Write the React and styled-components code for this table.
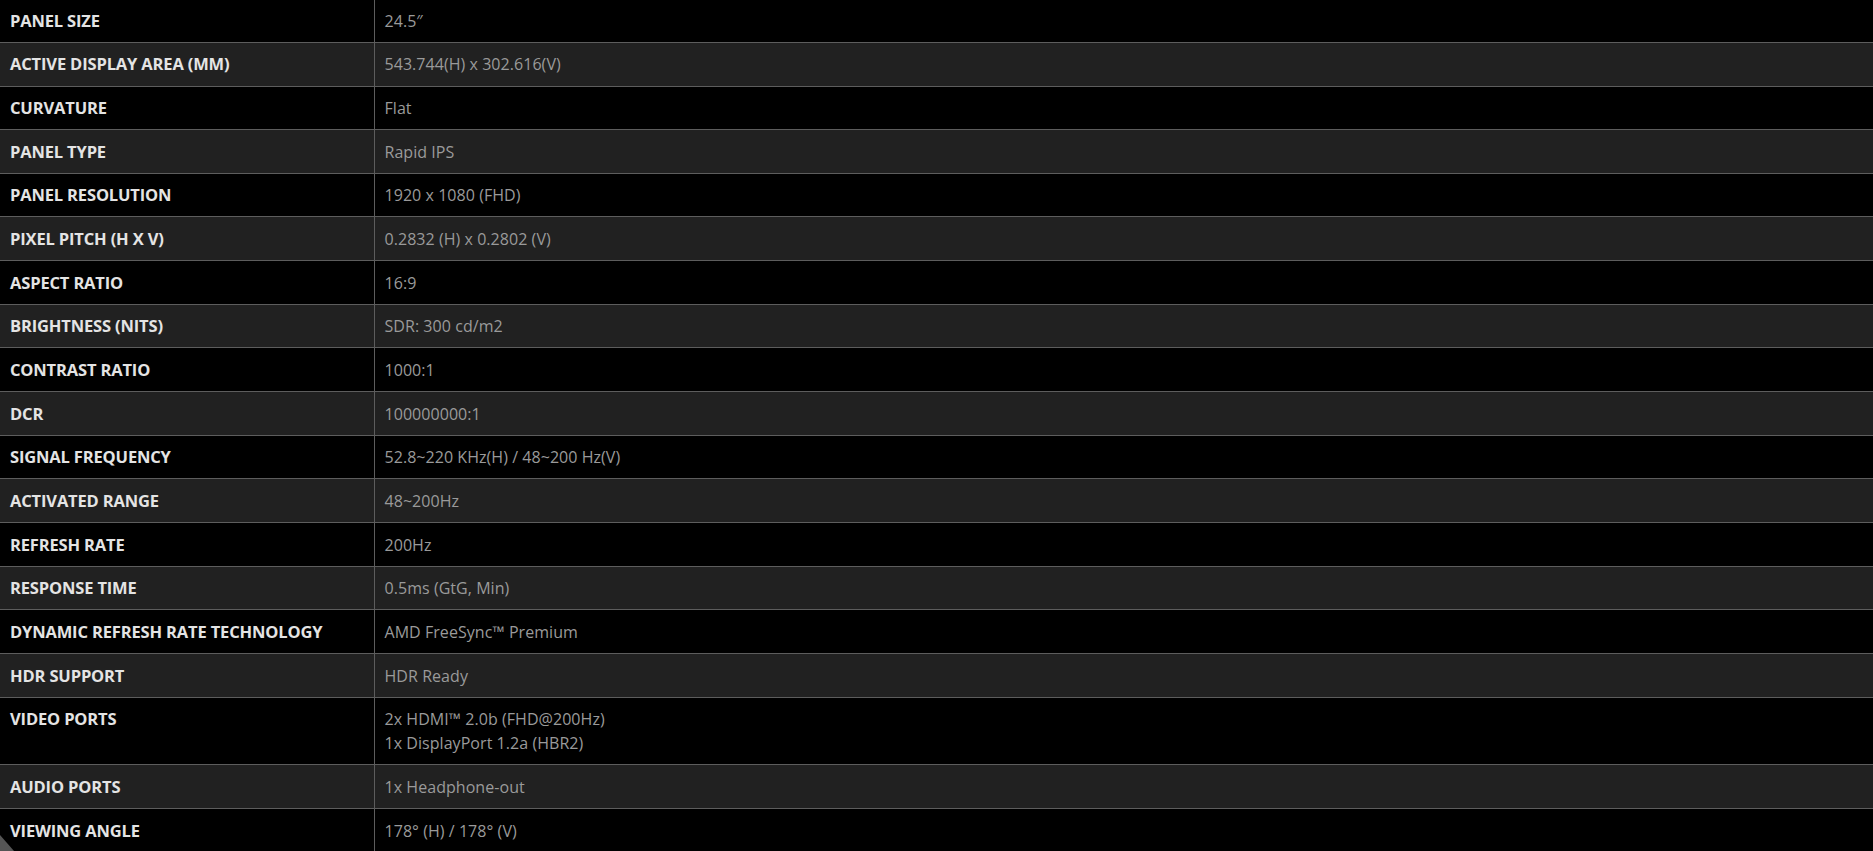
import React from 'react'
import styled, { createGlobalStyle } from 'styled-components'

const GlobalStyle = createGlobalStyle`
    html, body {
        margin: 0;
        padding: 0;
        background: #000;
    }
    body {
        font-family: "Open Sans", "Noto Sans", sans-serif;
        overflow: hidden;
    }
`

const Table = styled.table`
    width: 100%;
    table-layout: fixed;
    border-collapse: collapse;
    border-spacing: 0;
`

const Row = styled.tr`
    background: ${props => (props.$alt ? '#212121' : '#000')};
    border-bottom: 1px solid #5d5d5d;

    &:first-child > * {
        padding-top: 8.7px;
    }
`

const Label = styled.th`
    box-sizing: border-box;
    width: 374px;
    padding: 9.5px 10px 9.16px 10px;
    border-right: 1px solid #5d5d5d;
    text-align: left;
    vertical-align: top;
    font-size: 16.5px;
    line-height: 24px;
    font-weight: 700;
    letter-spacing: -0.15px;
    color: #e4e4e4;
`

const Value = styled.td`
    padding: 9.5px 10px 9.16px 10px;
    vertical-align: top;
    font-size: 16px;
    line-height: 24px;
    font-weight: 400;
    letter-spacing: 0.05px;
    color: #9a9a9a;
`

const Line = styled.div``

const Corner = styled.div`
    position: fixed;
    left: 0;
    bottom: 0;
    width: 0;
    height: 0;
    border-style: solid;
    border-width: 16px 0 0 14px;
    border-color: transparent transparent transparent #555;
`

const specs = [
    ['PANEL SIZE', ['24.5″']],
    ['ACTIVE DISPLAY AREA (MM)', ['543.744(H) x 302.616(V)']],
    ['CURVATURE', ['Flat']],
    ['PANEL TYPE', ['Rapid IPS']],
    ['PANEL RESOLUTION', ['1920 x 1080 (FHD)']],
    ['PIXEL PITCH (H X V)', ['0.2832 (H) x 0.2802 (V)']],
    ['ASPECT RATIO', ['16:9']],
    ['BRIGHTNESS (NITS)', ['SDR: 300 cd/m2']],
    ['CONTRAST RATIO', ['1000:1']],
    ['DCR', ['100000000:1']],
    ['SIGNAL FREQUENCY', ['52.8~220 KHz(H) / 48~200 Hz(V)']],
    ['ACTIVATED RANGE', ['48~200Hz']],
    ['REFRESH RATE', ['200Hz']],
    ['RESPONSE TIME', ['0.5ms (GtG, Min)']],
    ['DYNAMIC REFRESH RATE TECHNOLOGY', ['AMD FreeSync™ Premium']],
    ['HDR SUPPORT', ['HDR Ready']],
    ['VIDEO PORTS', ['2x HDMI™ 2.0b (FHD@200Hz)', '1x DisplayPort 1.2a (HBR2)']],
    ['AUDIO PORTS', ['1x Headphone-out']],
    ['VIEWING ANGLE', ['178° (H) / 178° (V)']],
]

const App = () => {
    return (
        <>
            <GlobalStyle />
            <Table>
                <tbody>
                    {specs.map(([label, values], i) => (
                        <Row key={label} $alt={i % 2 === 1}>
                            <Label>{label}</Label>
                            <Value>
                                {values.map(v => (
                                    <Line key={v}>{v}</Line>
                                ))}
                            </Value>
                        </Row>
                    ))}
                </tbody>
            </Table>
            <Corner />
        </>
    )
}

export default App
